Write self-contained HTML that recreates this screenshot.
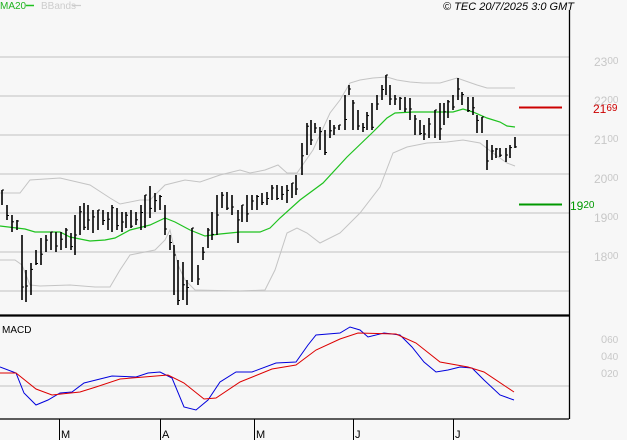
<!DOCTYPE html>
<html><head><meta charset="utf-8"><style>
html,body{margin:0;padding:0;background:#f7f7f7;}
body{width:627px;height:440px;overflow:hidden;position:relative;font-family:"Liberation Sans",sans-serif;}
svg{position:absolute;left:0;top:0;}
</style></head><body>
<svg width="627" height="440" viewBox="0 0 627 440" xmlns="http://www.w3.org/2000/svg" font-family="Liberation Sans, sans-serif">
<rect width="627" height="440" fill="#f7f7f7"/>
<g stroke="#cccccc" stroke-width="1.2">
<line x1="0" y1="57" x2="569" y2="57"/><line x1="0" y1="96" x2="569" y2="96"/>
<line x1="0" y1="135" x2="569" y2="135"/><line x1="0" y1="174" x2="569" y2="174"/>
<line x1="0" y1="213" x2="569" y2="213"/><line x1="0" y1="252" x2="569" y2="252"/>
<line x1="0" y1="291" x2="569" y2="291"/><line x1="0" y1="386" x2="569" y2="386"/>
</g>
<line x1="569.5" y1="10" x2="569.5" y2="419" stroke="#000" stroke-width="1.3"/>
<line x1="0" y1="315.5" x2="569" y2="315.5" stroke="#000" stroke-width="2.2"/>
<line x1="0" y1="419" x2="569" y2="419" stroke="#000" stroke-width="1.2"/>
<g fill="none" stroke="#c4c4c4" stroke-width="1">
<polyline points="0,193 20,193 30,180 60,178 90,185 110,198 120,204 140,200 150,200 165,185 185,180 200,182 220,175 240,170 250,173 265,170 278,165 287,173 297,173 313,150 330,113 340,100 350,83 360,80 373,78 387,77 397,80 410,82 423,83 440,83 457,78 477,85 487,88 500,88 515,88"/>
<polyline points="0,260 15,260 22,265 30,285 40,286 70,285 95,287 110,287 120,270 130,255 155,250 165,240 170,230 178,265 185,280 195,290 240,291 265,290 275,270 287,233 297,228 307,233 320,243 340,233 360,213 380,187 393,153 407,147 427,143 447,142 463,140 480,143 493,153 507,163 515,166"/>
</g>
<polyline fill="none" stroke="#1fc21f" stroke-width="1.2" points="0,226 25,229 35,232 60,232 70,237 90,241 105,240 115,238 130,230 150,225 165,218 175,222 190,230 205,236 220,234 240,232 260,232 270,228 280,218 300,200 323,183 347,157 373,132 387,118 395,113 413,112 433,112 453,112 463,109 473,112 487,118 500,122 507,126 515,127"/>
<g id="bars" stroke="#000" stroke-width="1.6"></g>
<line x1="519" y1="107.5" x2="562" y2="107.5" stroke="#cc0000" stroke-width="2"/>
<line x1="519" y1="204.5" x2="562" y2="204.5" stroke="#009900" stroke-width="2"/>
<polyline fill="none" stroke="#0000dd" stroke-width="1" points="0,367 16,373 24,393 36,405 48,400 60,393 72,392 84,383 96,380 112,376 136,377 148,373 160,372 172,378 184,407 196,410 208,400 220,382 236,372 252,372 276,363 296,362 308,345 316,335 340,333 350,327 360,330 368,337 384,333 400,335 412,347 424,362 436,372 448,370 460,367 472,368 484,380 500,395 514,400"/>
<polyline fill="none" stroke="#dd0000" stroke-width="1" points="0,373 16,373 36,389 52,395 80,392 96,387 120,379 144,377 168,375 184,383 204,399 216,398 240,382 272,369 296,365 316,350 340,339 358,333 396,334 416,343 440,362 468,367 484,372 514,392"/>
<g stroke="#000" stroke-width="1">
<line x1="59.5" y1="419" x2="59.5" y2="440"/><line x1="160.5" y1="419" x2="160.5" y2="440"/>
<line x1="254.5" y1="419" x2="254.5" y2="440"/><line x1="353.5" y1="419" x2="353.5" y2="440"/>
<line x1="453.5" y1="419" x2="453.5" y2="440"/>
</g>
<g font-size="11" fill="#000">
<text x="61" y="438">M</text><text x="162" y="438">A</text><text x="256" y="438">M</text><text x="355" y="438">J</text><text x="455" y="438">J</text>
<text x="2" y="333" font-size="10">MACD</text>
</g>
<text x="0" y="9" font-size="10" fill="#1fb31f">MA20</text>
<line x1="26" y1="5.5" x2="34" y2="5.5" stroke="#1fc21f" stroke-width="1.5"/>
<text x="41" y="9" font-size="10" fill="#cccccc">BBands</text>
<line x1="72" y1="5.5" x2="81" y2="5.5" stroke="#cccccc" stroke-width="1.2"/>
<text x="574" y="10" font-size="11" font-style="italic" fill="#000" text-anchor="end">© TEC 20/7/2025 3:0 GMT</text>
<g fill="#c8c8c8" font-size="12">
<text x="594" y="66">23<tspan font-size="10" dy="-2">00</tspan></text>
<text x="594" y="105">22<tspan font-size="10" dy="-2">00</tspan></text>
<text x="594" y="144">21<tspan font-size="10" dy="-2">00</tspan></text>
<text x="594" y="183">20<tspan font-size="10" dy="-2">00</tspan></text>
<text x="594" y="222">19<tspan font-size="10" dy="-2">00</tspan></text>
<text x="594" y="261">18<tspan font-size="10" dy="-2">00</tspan></text>
<text x="601" y="343" font-size="11">0<tspan font-size="10">60</tspan></text>
<text x="601" y="360" font-size="11">0<tspan font-size="10">40</tspan></text>
<text x="601" y="377" font-size="11">0<tspan font-size="10">20</tspan></text>
</g>
<text x="593" y="113" font-size="12" fill="#cc0000">21<tspan font-size="10" dy="-2">69</tspan></text>
<text x="570" y="210" font-size="12" fill="#009900">19<tspan font-size="10" dy="-2">20</tspan></text>
</svg>
<script>
var d=[[2,190,205],[7,205,220],[12,215,232],[17,220,230],[22,235,300],[26,270,302],[31,263,295],[36,250,265],[41,238,265],[46,235,252],[51,232,250],[56,232,252],[61,232,250],[66,228,248],[71,233,250],[75,215,255],[80,206,235],[84,203,230],[88,205,230],[93,210,233],[98,210,230],[103,210,225],[108,212,230],[112,205,232],[117,208,230],[122,212,232],[126,212,228],[131,210,228],[136,212,225],[141,205,230],[145,195,228],[150,186,218],[155,193,212],[160,195,210],[165,205,235],[170,235,250],[174,245,295],[178,260,305],[183,262,300],[187,280,305],[192,228,282],[198,265,285],[203,247,260],[208,228,248],[212,212,240],[217,195,235],[222,192,208],[227,192,210],[232,195,215],[238,210,243],[242,205,222],[247,195,222],[252,195,210],[257,195,210],[262,193,205],[267,192,205],[272,185,200],[277,185,200],[282,186,200],[287,185,203],[292,183,198],[296,175,195],[302,143,175],[307,123,155],[311,120,145],[315,123,133],[320,127,150],[325,130,155],[330,120,138],[334,125,135],[339,125,130],[345,95,130],[349,85,95],[353,100,130],[358,110,130],[363,123,132],[367,112,130],[372,103,130],[377,95,110],[382,85,100],[386,75,95],[390,85,105],[395,95,105],[400,97,110],[405,97,112],[410,98,120],[415,115,135],[420,120,135],[424,125,140],[429,118,138],[435,110,138],[440,103,140],[444,103,125],[448,100,118],[453,95,110],[458,78,100],[462,92,105],[468,97,112],[473,97,115],[477,115,133],[482,117,133],[487,140,170],[492,145,160],[496,148,158],[500,148,157],[506,148,162],[510,145,158],[515,137,148]];
var g=document.getElementById('bars'),s='',ns='http://www.w3.org/2000/svg';
d.forEach(function(b,i){var l=document.createElementNS(ns,'line');l.setAttribute('x1',b[0]);l.setAttribute('x2',b[0]);l.setAttribute('y1',b[1]);l.setAttribute('y2',b[2]);g.appendChild(l);
var c=b[1]+(b[2]-b[1])*((i*37)%10)/10;var t=document.createElementNS(ns,'line');t.setAttribute('x1',b[0]);t.setAttribute('x2',b[0]+2);t.setAttribute('y1',c);t.setAttribute('y2',c);t.setAttribute('stroke-width','1');g.appendChild(t);});
</script>
</body></html>
